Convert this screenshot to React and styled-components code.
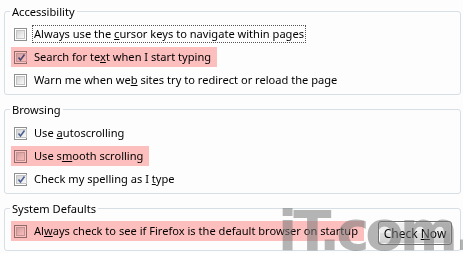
import React from 'react';
import styled, { createGlobalStyle } from 'styled-components';

const GlobalStyle = createGlobalStyle`
  html, body {
    margin: 0;
    background: #fdfdfd;
  }
  body {
    font-family: "Noto Sans", "Open Sans", sans-serif;
    font-size: 11.1px;
    color: #000;
  }
`;

const Page = styled.div`
  position: relative;
  width: 463px;
  height: 253px;
  overflow: hidden;
  box-sizing: border-box;
  padding: 4px 2px 0 4px;
  display: flex;
  flex-direction: column;
  gap: 7px;
`;

const Group = styled.fieldset`
  margin: 0;
  padding: ${p => p.$top || 5}px 0 ${p => p.$bottom || 4}px 0;
  border: 1px solid #d5dfe5;
  border-radius: 3px;
  display: flex;
  flex-direction: column;
  gap: 3px;
  min-width: 0;
`;

const Legend = styled.legend`
  margin-left: 5px;
  padding: 0 2px;
  line-height: 15px;
  height: 15px;
`;

const Row = styled.div`
  display: flex;
  align-items: center;
  justify-content: space-between;
  padding-right: 8px;
`;

const Option = styled.label`
  position: relative;
  display: inline-flex;
  align-items: center;
  gap: 5px;
  height: 20px;
  margin-left: 6px;
  padding: 0 4px 0 3px;
  align-self: flex-start;

  &::after {
    content: '';
    display: ${p => (p.$marked ? 'block' : 'none')};
    position: absolute;
    inset: 0;
    background: #ffc0c0;
    mix-blend-mode: multiply;
    pointer-events: none;
  }
`;

const Box = styled.span`
  box-sizing: border-box;
  width: 13px;
  height: 13px;
  border: 1px solid #8e8f8f;
  background: #fff;
  padding: 1px;
  flex: none;
  display: flex;
`;

const BoxInner = styled.span`
  flex: 1;
  background: linear-gradient(135deg, #d3d3d3 0%, #eeeeee 70%, #f8f8f8 100%);
  border: 1px solid #c4c4c4;
  display: flex;
  align-items: center;
  justify-content: center;
`;

const Text = styled.span`
  line-height: 16px;
  padding: 0 1px;
  border: 1px dotted ${p => (p.$focused ? '#555' : 'transparent')};
  white-space: nowrap;
`;

const Key = styled.span`
  text-decoration: underline;
`;

const Button = styled.button`
  box-sizing: border-box;
  flex: none;
  width: 74px;
  height: 24px;
  font: inherit;
  font-size: 12px;
  white-space: nowrap;
  color: #000;
  border: 1px solid #707070;
  border-radius: 3px;
  box-shadow: inset 0 0 0 1px #fcfcfc;
  background: linear-gradient(#f2f2f2 0%, #ebebeb 50%, #dddddd 51%, #cfcfcf 100%);
  padding: 0;
`;

const Watermark = styled.div`
  position: absolute;
  left: 278px;
  top: 198px;
  font-family: "DejaVu Sans", sans-serif;
  font-weight: 700;
  font-size: 56px;
  letter-spacing: -4px;
  color: rgba(120, 120, 120, 0.55);
  pointer-events: none;
  white-space: nowrap;
`;

const Check = () => (
  <svg width="9" height="9" viewBox="0 0 9 9">
    <path d="M1.5 4.5 L3.5 7 L7.5 1.5" fill="none" stroke="#4a5f96" strokeWidth="1.6" />
  </svg>
);

const CheckOption = ({ checked, marked, focused, children }) => (
  <Option $marked={marked}>
    <Box>
      <BoxInner>{checked && <Check />}</BoxInner>
    </Box>
    <Text $focused={focused}>{children}</Text>
  </Option>
);

export default function App() {
  return (
    <>
      <GlobalStyle />
      <Page>
        <Group>
          <Legend>Accessibility</Legend>
          <CheckOption focused>
            Always use the <Key>c</Key>ursor keys to navigate within pages
          </CheckOption>
          <CheckOption checked marked>
            Search for te<Key>x</Key>t when I start typing
          </CheckOption>
          <CheckOption>
            Warn me when we<Key>b</Key> sites try to redirect or reload the page
          </CheckOption>
        </Group>

        <Group $top={6}>
          <Legend>Browsing</Legend>
          <CheckOption checked>
            Use <Key>a</Key>utoscrolling
          </CheckOption>
          <CheckOption marked>
            Use s<Key>m</Key>ooth scrolling
          </CheckOption>
          <CheckOption checked>
            Check my spelling as I <Key>t</Key>ype
          </CheckOption>
        </Group>

        <Group $bottom={5}>
          <Legend>System Defaults</Legend>
          <Row>
            <CheckOption marked>
              Al<Key>w</Key>ays check to see if Firefox is the default browser on startup
            </CheckOption>
            <Button>
              Check <Key>N</Key>ow
            </Button>
          </Row>
        </Group>
        <Watermark>iT.com.cn</Watermark>
      </Page>
    </>
  );
}
